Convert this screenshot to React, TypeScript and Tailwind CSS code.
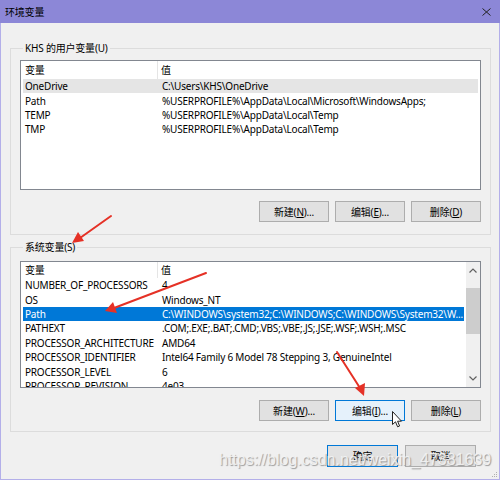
import React from "react";

type Row = { name: string; value: string; state?: "hot" | "selected" };

const USER_VARS: Row[] = [
  { name: "OneDrive", value: "C:\\Users\\KHS\\OneDrive", state: "hot" },
  { name: "Path", value: "%USERPROFILE%\\AppData\\Local\\Microsoft\\WindowsApps;" },
  { name: "TEMP", value: "%USERPROFILE%\\AppData\\Local\\Temp" },
  { name: "TMP", value: "%USERPROFILE%\\AppData\\Local\\Temp" },
];

const SYSTEM_VARS: Row[] = [
  { name: "NUMBER_OF_PROCESSORS", value: "4" },
  { name: "OS", value: "Windows_NT" },
  {
    name: "Path",
    value: "C:\\WINDOWS\\system32;C:\\WINDOWS;C:\\WINDOWS\\System32\\W...",
    state: "selected",
  },
  { name: "PATHEXT", value: ".COM;.EXE;.BAT;.CMD;.VBS;.VBE;.JS;.JSE;.WSF;.WSH;.MSC" },
  { name: "PROCESSOR_ARCHITECTURE", value: "AMD64" },
  { name: "PROCESSOR_IDENTIFIER", value: "Intel64 Family 6 Model 78 Stepping 3, GenuineIntel" },
  { name: "PROCESSOR_LEVEL", value: "6" },
  { name: "PROCESSOR_REVISION", value: "4e03" },
];

function ListView({
  rows,
  headerClass,
  heightClass,
  scroll,
}: {
  rows: Row[];
  headerClass: string;
  heightClass: string;
  scroll?: boolean;
}) {
  return (
    <div className={"flex w-[461px] overflow-hidden border border-[#828790] bg-white " + heightClass}>
      <div className="min-w-0 flex-1">
        <div className={"flex items-center " + headerClass}>
          <div className="flex h-full w-[137px] items-center border-r border-[#e5e5e5] pl-[4px]">变量</div>
          <div className="pl-[3px]">值</div>
        </div>
        {rows.map((r) => (
          <div
            key={r.name}
            className={
              "mx-[2px] flex h-[14.4px] items-center whitespace-nowrap " +
              (r.state === "selected"
                ? "bg-[#0078d7] text-white"
                : r.state === "hot"
                  ? "bg-[#e5e5e5]"
                  : "")
            }
          >
            <div className="w-[135px] shrink-0 pl-[2px]">{r.name}</div>
            <div className="min-w-0 pl-[4px]">{r.value}</div>
          </div>
        ))}
      </div>
      {scroll && (
        <div className="flex w-[14px] shrink-0 flex-col bg-[#f0f0f0]">
          <div className="flex h-[17px] items-center justify-center">
            <svg width="8" height="5" viewBox="0 0 8 5">
              <path d="M0.5 4.5 L4 1 L7.5 4.5" fill="none" stroke="#606060" strokeWidth="1.2" />
            </svg>
          </div>
          <div className="mt-[9px] h-[46px] bg-[#cdcdcd]" />
          <div className="flex-1" />
          <div className="flex h-[17px] items-center justify-center">
            <svg width="8" height="5" viewBox="0 0 8 5">
              <path d="M0.5 0.5 L4 4 L7.5 0.5" fill="none" stroke="#606060" strokeWidth="1.2" />
            </svg>
          </div>
        </div>
      )}
    </div>
  );
}

function Btn({ children, hot, def }: { children: React.ReactNode; hot?: boolean; def?: boolean }) {
  return (
    <div
      className={
        "flex h-full w-full items-center justify-center border " +
        (hot
          ? "border-[#0078d7] bg-[#e5f1fb]"
          : def
            ? "border-[#0078d7] bg-[#e1e1e1]"
            : "border-[#adadad] bg-[#e1e1e1]")
      }
    >
      {children}
    </div>
  );
}

function ButtonRow({ labels, hotIndex }: { labels: [string, string, string][]; hotIndex?: number }) {
  return (
    <div className="flex justify-end gap-[6px] pr-[9px]">
      {labels.map(([pre, key, post], i) => (
        <div key={i} className="h-[21px] w-[70px]">
          <Btn hot={i === hotIndex}>
            <span>
              {pre}
              <span className="underline underline-offset-1">{key}</span>
              {post}
            </span>
          </Btn>
        </div>
      ))}
    </div>
  );
}

export default function App() {
  return (
    <div
      className="relative flex h-[480px] w-[500px] flex-col overflow-hidden bg-[#f0f0f0] text-[10px] leading-none tracking-[-0.2px] text-black"
      style={{ fontFamily: '"Noto Sans", "Noto Sans CJK SC", sans-serif' }}
    >
      {/* Title bar */}
      <div className="flex h-[23px] shrink-0 items-center justify-between bg-[#8c87d7] pl-[5px] pr-[9px]">
        <span>环境变量</span>
        <svg width="9" height="8" viewBox="0 0 9 8">
          <path d="M0.5 0.5 L8.5 7.5 M8.5 0.5 L0.5 7.5" stroke="#222" strokeWidth="1" />
        </svg>
      </div>

      <div className="flex flex-1 flex-col border-x border-b border-[#b3afe9]">
        {/* User variables */}
        <fieldset className="ml-[9px] mt-[19px] w-[481px] border border-[#dcdcdc] pb-[12px] pl-[9px] pt-[6px]">
          <legend className="ml-[3px] px-[2px] leading-[12px]">KHS 的用户变量(U)</legend>
          <ListView rows={USER_VARS} headerClass="h-[18px]" heightClass="h-[130px]" />
          <div className="mt-[11px]">
            <ButtonRow
              labels={[
                ["新建(", "N", ")..."],
                ["编辑(", "E", ")..."],
                ["删除(", "D", ")"],
              ]}
            />
          </div>
        </fieldset>

        {/* System variables */}
        <fieldset className="ml-[9px] mt-[6px] w-[481px] border border-[#dcdcdc] pb-[10px] pl-[9px] pt-[8px]">
          <legend className="ml-[3px] px-[2px] leading-[12px]">系统变量(S)</legend>
          <ListView rows={SYSTEM_VARS} headerClass="h-[16px]" heightClass="h-[127px]" scroll />
          <div className="mt-[12px]">
            <ButtonRow
              hotIndex={1}
              labels={[
                ["新建(", "W", ")..."],
                ["编辑(", "I", ")..."],
                ["删除(", "L", ")"],
              ]}
            />
          </div>
        </fieldset>

        {/* OK / Cancel */}
        <div className="mt-[13px] flex justify-end gap-[7px] pr-[23px]">
          <div className="h-[22px] w-[71px]">
            <Btn def>确定</Btn>
          </div>
          <div className="h-[22px] w-[71px]">
            <Btn>取消</Btn>
          </div>
        </div>
      </div>

      {/* watermark */}
      <div
        className="pointer-events-none absolute left-[219px] top-[452px] whitespace-nowrap text-[16px] tracking-normal text-[#f4f4f4]/90 [text-shadow:1px_1px_1px_#9a9a9a]"
        style={{ fontFamily: '"Liberation Sans", Arial, sans-serif' }}
      >
        https://blog.csdn.net/weixin_47381639
      </div>

      {/* resize grip */}
      <svg className="absolute bottom-[2px] right-[2px]" width="8" height="8" viewBox="0 0 8 8">
        <rect x="6" y="2" width="1" height="1" fill="#b0b0b0" />
        <rect x="4" y="4" width="1" height="1" fill="#b0b0b0" />
        <rect x="6" y="4" width="1" height="1" fill="#b0b0b0" />
        <rect x="2" y="6" width="1" height="1" fill="#b0b0b0" />
        <rect x="4" y="6" width="1" height="1" fill="#b0b0b0" />
        <rect x="6" y="6" width="1" height="1" fill="#b0b0b0" />
      </svg>

      {/* annotation arrows */}
      <svg className="pointer-events-none absolute left-0 top-0" width="500" height="480" viewBox="0 0 500 480">
        <g stroke="#e53126" strokeWidth="2" fill="#e53126" strokeLinecap="round">
          <line x1="111" y1="216" x2="80" y2="238" />
          <polygon points="72,243 78,232 84,241" stroke="none" />
          <line x1="206" y1="273" x2="114" y2="308" />
          <polygon points="105,311 113,302 117,313" stroke="none" />
          <line x1="337" y1="352" x2="360" y2="388" />
          <polygon points="364,396 355,388 365,383" stroke="none" />
        </g>
      </svg>

      {/* mouse cursor */}
      <svg className="pointer-events-none absolute left-[392px] top-[411px]" width="12" height="18" viewBox="0 0 12 18">
        <path
          d="M0.5 0.5 L0.5 13.5 L3.5 10.8 L5.6 15.8 L7.6 15 L5.6 10.2 L9.5 10.2 Z"
          fill="#fff"
          stroke="#222"
          strokeWidth="1"
          strokeLinejoin="round"
        />
      </svg>
    </div>
  );
}
